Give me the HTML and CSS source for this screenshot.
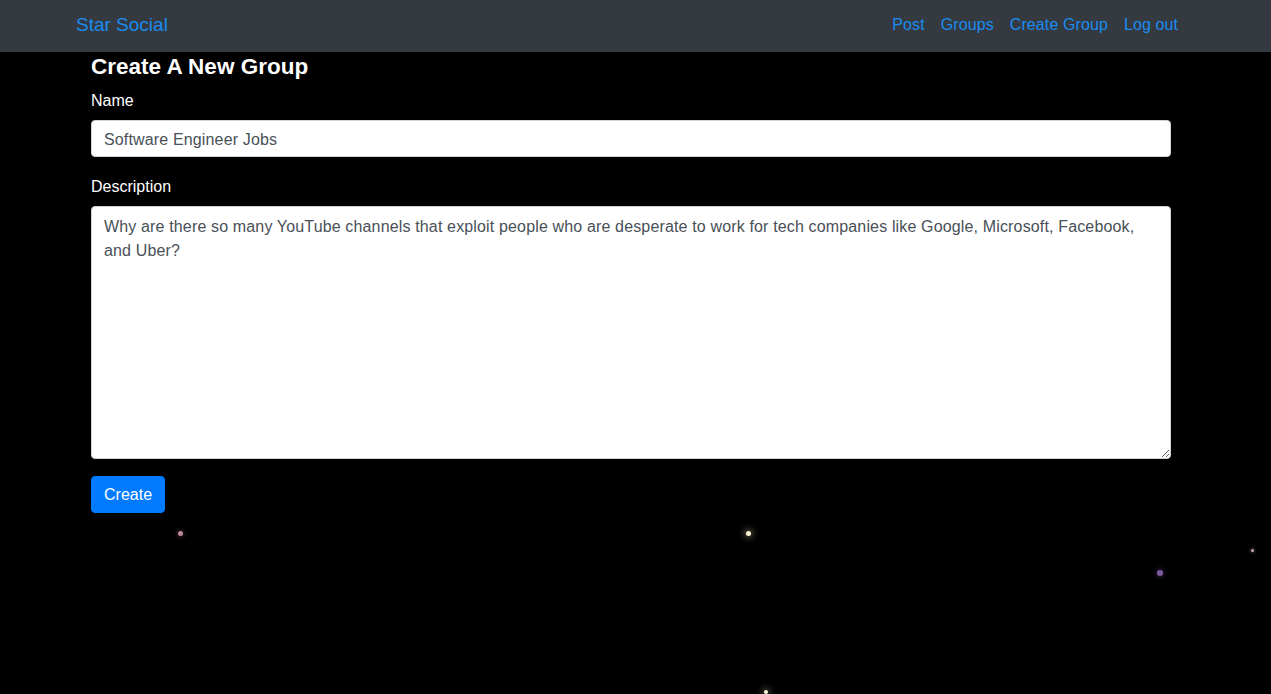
FILE: index.html
```html
<!DOCTYPE html>
<html>
<head>
<meta charset="utf-8">
<link rel="stylesheet" href="styles.css">
</head>
<body>
<nav class="navbar">
  <a class="brand" href="#">Star Social</a>
  <ul class="nav">
    <li><a href="#">Post</a></li>
    <li><a href="#">Groups</a></li>
    <li><a href="#">Create Group</a></li>
    <li><a href="#">Log out</a></li>
  </ul>
</nav>
<main class="container">
  <h2 class="title">Create A New Group</h2>
  <form class="form">
    <div class="group group-name">
      <label class="label">Name</label>
      <input class="control" type="text" value="Software Engineer Jobs">
    </div>
    <div class="group">
      <label class="label">Description</label>
      <textarea class="control area">Why are there so many YouTube channels that exploit people who are desperate to work for tech companies like Google, Microsoft, Facebook, and Uber?</textarea>
    </div>
    <button class="btn" type="button">Create</button>
  </form>
</main>
<div class="star s1"></div>
<div class="star s2"></div>
<div class="star s3"></div>
<div class="star s4"></div>
<div class="star s5"></div>
</body>
</html>
```
FILE: styles.css
```css
* { box-sizing: border-box; }
html, body { margin: 0; height: 100%; }
body {
  background: #000;
  font-family: "Liberation Sans", Arial, sans-serif;
  font-size: 16px;
  line-height: 1.5;
  color: #fff;
  overflow: hidden;
  position: relative;
}
.navbar {
  height: 52px;
  background: #343a40;
  display: flex;
  align-items: center;
  justify-content: space-between;
  padding: 0 85px 2px 76px;
}
.brand {
  color: #1a8cf0;
  text-decoration: none;
  font-size: 19px;
}
.nav {
  list-style: none;
  margin: 0;
  padding: 0;
  display: flex;
}
.nav a {
  display: block;
  padding: 0 8px;
  color: #1a8cf0;
  text-decoration: none;
  font-size: 16px;
  letter-spacing: 0.1px;
}
.container {
  width: 1080px;
  margin-left: 91px;
}
.title {
  margin: 0;
  padding-top: 1px;
  font-size: 22.5px;
  line-height: 28px;
  font-weight: bold;
}
.form { margin-top: 10px; }
.group { margin-bottom: 17px; }
.group-name { margin-bottom: 20px; }
.label {
  display: block;
  font-size: 16px;
  line-height: 20px;
  margin-bottom: 9px;
}
.control {
  display: block;
  width: 100%;
  height: 37px;
  padding: 7px 12px 5px;
  font-family: inherit;
  font-size: 16px;
  line-height: 24px;
  letter-spacing: 0.15px;
  color: #495057;
  background: #fff;
  border: 1px solid #ced4da;
  border-radius: 4px;
}
.area {
  height: 253px;
  padding-top: 8px;
  resize: vertical;
  margin: 0;
}
.btn {
  display: block;
  margin-top: 0;
  height: 37px;
  padding: 6px 12px;
  font-family: inherit;
  font-size: 16px;
  color: #fff;
  background: #007bff;
  border: 1px solid #007bff;
  border-radius: 4px;
}
.star {
  position: absolute;
  border-radius: 50%;
}
.s1 { left: 178px; top: 531px; width: 5px; height: 5px; background: #b88a9c; box-shadow: 0 0 4px 1px rgba(180,100,130,0.35); }
.s2 { left: 746px; top: 531px; width: 5px; height: 5px; background: #fff8dc; box-shadow: 0 0 6px 2px rgba(255,240,190,0.35); }
.s3 { left: 1157px; top: 570px; width: 6px; height: 6px; background: #7a5a9c; box-shadow: 0 0 4px 1px rgba(120,80,170,0.4); }
.s4 { left: 1251px; top: 549px; width: 3px; height: 3px; background: #c8a8b0; box-shadow: 0 0 3px 1px rgba(200,160,170,0.3); }
.s5 { left: 764px; top: 690px; width: 4px; height: 4px; background: #fff8dc; box-shadow: 0 0 6px 2px rgba(255,240,190,0.3); }
```
